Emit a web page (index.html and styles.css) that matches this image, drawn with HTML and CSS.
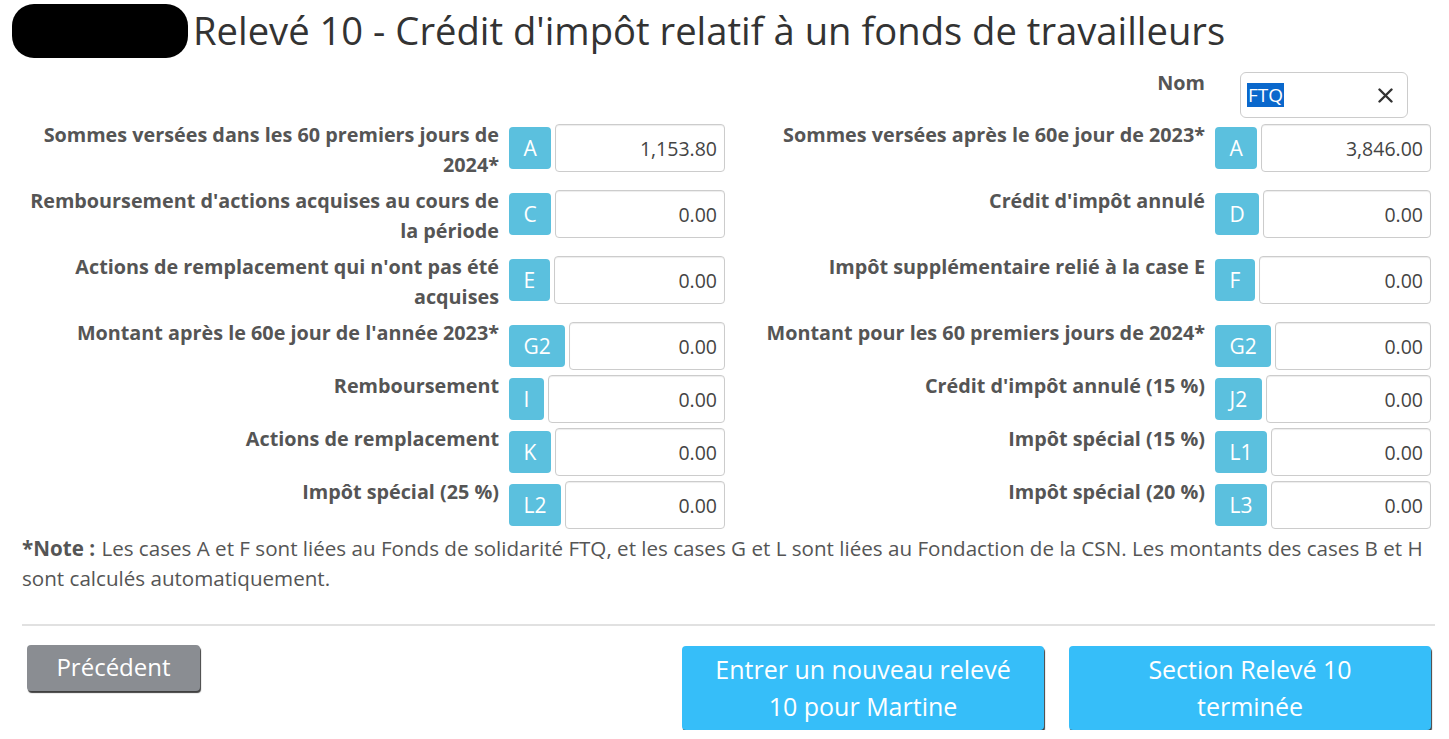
FILE: index.html
```
<!DOCTYPE html>
<html lang="fr">
<head>
<meta charset="utf-8">
<title>Relevé 10</title>
<link rel="stylesheet" href="styles.css">
</head>
<body>
<div class="page">
  <header class="title-row">
    <span class="redact"></span>
    <h1 class="title">Relevé 10 - Crédit d'impôt relatif à un fonds de travailleurs</h1>
  </header>

  <div class="form-grid">
    <div class="field field-empty"></div>
    <div class="field nom-field">
      <label class="field-label">Nom</label>
      <div class="group">
        <div class="nom-input"><span class="sel">FTQ</span><svg class="clear" width="15" height="15" viewBox="0 0 15 15" aria-hidden="true"><path d="M1.5 1.5 L13.5 13.5 M13.5 1.5 L1.5 13.5" stroke="#333" stroke-width="2.4" stroke-linecap="round"/></svg></div>
      </div>
    </div>

    <div class="field">
      <label class="field-label">Sommes versées dans les 60 premiers jours de 2024*</label>
      <div class="group"><span class="badge">A</span><input class="input" type="text" value="1,153.80"></div>
    </div>
    <div class="field">
      <label class="field-label">Sommes versées après le 60e jour de 2023*</label>
      <div class="group"><span class="badge">A</span><input class="input" type="text" value="3,846.00"></div>
    </div>

    <div class="field">
      <label class="field-label">Remboursement d'actions acquises au cours de la période</label>
      <div class="group"><span class="badge">C</span><input class="input" type="text" value="0.00"></div>
    </div>
    <div class="field">
      <label class="field-label">Crédit d'impôt annulé</label>
      <div class="group"><span class="badge">D</span><input class="input" type="text" value="0.00"></div>
    </div>

    <div class="field">
      <label class="field-label">Actions de remplacement qui n'ont pas été acquises</label>
      <div class="group"><span class="badge">E</span><input class="input" type="text" value="0.00"></div>
    </div>
    <div class="field">
      <label class="field-label">Impôt supplémentaire relié à la case E</label>
      <div class="group"><span class="badge">F</span><input class="input" type="text" value="0.00"></div>
    </div>

    <div class="field">
      <label class="field-label">Montant après le 60e jour de l'année 2023*</label>
      <div class="group"><span class="badge">G2</span><input class="input" type="text" value="0.00"></div>
    </div>
    <div class="field">
      <label class="field-label">Montant pour les 60 premiers jours de 2024*</label>
      <div class="group"><span class="badge">G2</span><input class="input" type="text" value="0.00"></div>
    </div>

    <div class="field">
      <label class="field-label">Remboursement</label>
      <div class="group"><span class="badge">I</span><input class="input" type="text" value="0.00"></div>
    </div>
    <div class="field">
      <label class="field-label">Crédit d'impôt annulé (15 %)</label>
      <div class="group"><span class="badge">J2</span><input class="input" type="text" value="0.00"></div>
    </div>

    <div class="field">
      <label class="field-label">Actions de remplacement</label>
      <div class="group"><span class="badge">K</span><input class="input" type="text" value="0.00"></div>
    </div>
    <div class="field">
      <label class="field-label">Impôt spécial (15 %)</label>
      <div class="group"><span class="badge">L1</span><input class="input" type="text" value="0.00"></div>
    </div>

    <div class="field">
      <label class="field-label">Impôt spécial (25 %)</label>
      <div class="group"><span class="badge">L2</span><input class="input" type="text" value="0.00"></div>
    </div>
    <div class="field">
      <label class="field-label">Impôt spécial (20 %)</label>
      <div class="group"><span class="badge">L3</span><input class="input" type="text" value="0.00"></div>
    </div>
  </div>

  <p class="note"><strong class="note-lead">*Note :</strong> Les cases A et F sont liées au Fonds de solidarité FTQ, et les cases G et L sont liées au Fondaction de la CSN. Les montants des cases B et H sont calculés automatiquement.</p>

  <hr class="divider">

  <div class="actions">
    <button class="btn btn-gray" type="button">Précédent</button>
    <div class="actions-right">
      <button class="btn btn-blue" type="button">Entrer un nouveau relevé<br>10 pour Martine</button>
      <button class="btn btn-blue" type="button">Section Relevé 10<br>terminée</button>
    </div>
  </div>
</div>
</body>
</html>
```

FILE: styles.css
```
* { box-sizing: border-box; }

body {
  margin: 0;
  background: #fff;
  font-family: "Open Sans", "Noto Sans", sans-serif;
  color: #555;
}

.page {
  padding: 0 14px 0 22px;
}

.title-row {
  display: flex;
  align-items: center;
  height: 60px;
  margin-left: -10px;
}

.redact {
  flex: none;
  width: 176px;
  height: 54px;
  background: #000;
  border-radius: 22px;
  margin-right: 5px;
  margin-top: 2px;
}

.title {
  margin: 0;
  font-size: 38.2px;
  font-weight: 400;
  color: #333;
  line-height: 1;
  white-space: nowrap;
}

.form-grid {
  display: grid;
  grid-template-columns: 703px 703px;
  column-gap: 3px;
  row-gap: 5px;
  margin-top: 12px;
}

.field {
  display: flex;
  gap: 10px;
  align-items: flex-start;
}

.field-label {
  flex: 1;
  text-align: right;
  font-weight: 700;
  font-size: 19.8px;
  line-height: 30px;
  margin-top: -4px;
  padding-bottom: 5px;
  color: #555;
}

.group {
  flex: none;
  width: 216px;
  height: 48px;
  display: flex;
  align-items: center;
}

.badge {
  flex: none;
  height: 42px;
  padding: 0 14.5px;
  display: flex;
  align-items: center;
  background: #5bc0de;
  color: #fff;
  border-radius: 4px;
  font-size: 21px;
  margin-right: 4px;
}

.input {
  flex: 1;
  min-width: 0;
  height: 48px;
  border: 1px solid #ccc;
  border-radius: 4px;
  box-shadow: inset 0 1px 1px rgba(0, 0, 0, 0.075);
  padding: 0 7px;
  text-align: right;
  font-family: inherit;
  font-size: 19.5px;
  color: #444;
  background: #fff;
}

.nom-field .group {
  height: 46px;
}

.nom-field {
  margin-bottom: 1px;
}

.nom-field .field-label {
  margin-top: -4px;
}

.nom-input {
  margin-left: 25px;
  width: 168px;
  height: 46px;
  border: 1px solid #ccc;
  border-radius: 6px;
  display: flex;
  align-items: center;
  justify-content: space-between;
  padding: 0 14px 0 6px;
  font-size: 19px;
}

.sel {
  background: #0a68cc;
  color: #fff;
  line-height: 24px;
  padding: 0 1px;
}

.clear {
  display: block;
}

.note {
  margin: 4px 0 0;
  font-size: 20.6px;
  line-height: 30px;
  color: #555;
}

.note-lead {
  font-weight: 700;
  margin-right: 1px;
}

.divider {
  border: 0;
  border-top: 2px solid #e1e1e1;
  margin: 31px 0 0;
}

.actions {
  display: flex;
  justify-content: space-between;
  align-items: flex-start;
  margin-top: 19px;
  padding: 0 4px 0 5px;
}

.actions-right {
  display: flex;
  gap: 25px;
  margin-top: 1px;
}

.btn {
  border: 0;
  color: #fff;
  font-family: inherit;
  border-radius: 4px;
  box-shadow: 1px 2px 1px rgba(0, 0, 0, 0.75);
  cursor: pointer;
}

.btn-gray {
  background: #8a8d92;
  width: 173px;
  height: 46px;
  font-size: 24px;
  padding: 0 0 3px;
}

.btn-blue {
  background: #36bef9;
  width: 362px;
  height: 84px;
  font-size: 25px;
  line-height: 37px;
  padding: 0;
}
```
